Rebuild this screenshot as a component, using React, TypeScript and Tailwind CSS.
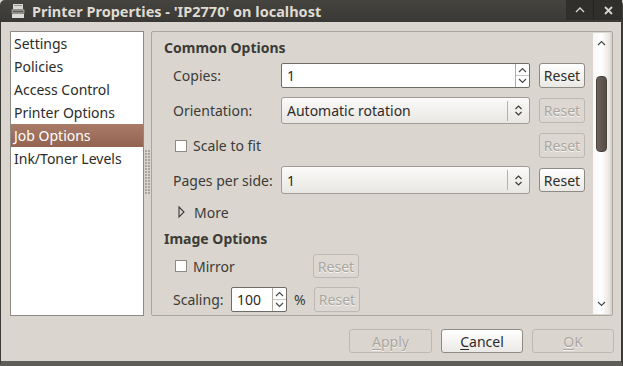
import React from "react";

const FONT = { fontFamily: '"Noto Sans", "DejaVu Sans", sans-serif' };

function ResetBtn({ enabled, className = "" }: { enabled: boolean; className?: string }) {
  return (
    <div
      className={
        "flex items-center justify-center rounded-[3px] border text-[14px] " +
        (enabled
          ? "border-[#8f8b84] bg-gradient-to-b from-[#ffffff] to-[#ebe9e5] text-[#2e2d2a]"
          : "border-[#bdb9b2] bg-[#dcd8d1] text-[#aaa69f] [text-shadow:0_1px_0_#f5f4f2]") +
        " " +
        className
      }
    >
      Reset
    </div>
  );
}

function SpinArrows({ className = "" }: { className?: string }) {
  return (
    <div className={"flex flex-col items-center justify-center border-l border-[#b0aca5] " + className}>
      <svg width="9" height="6" viewBox="0 0 9 6">
        <path d="M1 5 L4.5 1.5 L8 5" fill="none" stroke="#4a4945" strokeWidth="1.2" />
      </svg>
      <div className="w-full h-px bg-[#c9c5be] my-[2px]" />
      <svg width="9" height="6" viewBox="0 0 9 6">
        <path d="M1 1 L4.5 4.5 L8 1" fill="none" stroke="#4a4945" strokeWidth="1.2" />
      </svg>
    </div>
  );
}

function ComboArrows() {
  return (
    <div className="flex items-center h-full">
      <div className="w-px h-[20px] bg-[#b5b1aa]" />
      <div className="w-[21px] flex justify-center">
        <svg width="9" height="13" viewBox="0 0 9 13">
          <path d="M1.5 5 L4.5 2 L7.5 5" fill="none" stroke="#3c3b37" strokeWidth="1.2" />
          <path d="M1.5 8 L4.5 11 L7.5 8" fill="none" stroke="#3c3b37" strokeWidth="1.2" />
        </svg>
      </div>
    </div>
  );
}

function Checkbox() {
  return <div className="w-[12px] h-[12px] border border-[#8f8b84] bg-white shrink-0" />;
}

export default function App() {
  const items = ["Settings", "Policies", "Access Control", "Printer Options", "Job Options", "Ink/Toner Levels"];
  return (
    <div
      style={FONT}
      className="w-[623px] h-[366px] flex flex-col overflow-hidden bg-[#dad6cf] text-[#3c3b37]"
    >
      {/* Title bar */}
      <div className="h-[22px] shrink-0 flex items-center bg-gradient-to-b from-[#45443f] to-[#3a3935] rounded-t-[5px]">
        <div className="w-[32px] flex justify-center pl-[3px]">
          <svg width="14" height="16" viewBox="0 0 14 16">
            <rect x="2" y="1" width="10" height="5" fill="#d8d7d3" />
            <rect x="3" y="2" width="8" height="1" fill="#9a9994" />
            <rect x="0.5" y="6" width="13" height="5" rx="1" fill="#8f8e89" />
            <rect x="2" y="8" width="10" height="1" fill="#5a5955" />
            <rect x="1" y="11" width="12" height="4" fill="#dcdbd7" />
          </svg>
        </div>
        <div className="text-[14.5px] font-bold text-[#dfdbd2] leading-none">
          Printer Properties - 'IP2770' on localhost
        </div>
        <div className="flex-1" />
        <div className="flex h-[20px] self-start mr-[1px]">
          <div className="w-[28px] h-full bg-[#302f2c] flex items-center justify-center border-r border-[#25241f]">
            <svg width="10" height="6" viewBox="0 0 10 6">
              <path d="M1 5 L5 1 L9 5" fill="none" stroke="#d8d6d0" strokeWidth="1.4" />
            </svg>
          </div>
          <div className="w-[28px] h-full bg-[#302f2c] flex items-center justify-center">
            <svg width="9" height="9" viewBox="0 0 9 9">
              <path d="M1 1 L8 8 M8 1 L1 8" fill="none" stroke="#d8d6d0" strokeWidth="1.8" />
            </svg>
          </div>
        </div>
      </div>

      {/* Body */}
      <div className="flex-1 flex flex-col border-l border-l-[#3c3b37] border-r-2 border-r-[#3c3b37] border-b-[5px] border-b-[#5f5d58]">
        <div className="flex pt-[9px] pl-[9px]">
          {/* Left list */}
          <div className="w-[134px] h-[285px] bg-white border border-[#8d8a85]">
            {items.map((t) => (
              <div
                key={t}
                className={
                  "h-[23px] flex items-center pl-[3px] text-[14px] " +
                  (t === "Job Options"
                    ? "bg-gradient-to-b from-[#a87c69] to-[#93634f] text-white"
                    : "text-[#2c2b28]")
                }
              >
                {t}
              </div>
            ))}
          </div>
          {/* Pane handle */}
          <div className="w-[7px] h-[285px] flex justify-center pt-[119px]">
            <div className="grid grid-cols-2 gap-x-[1px] gap-y-[1px] h-[45px] content-start">
              {Array.from({ length: 30 }).map((_, i) => (
                <div key={i} className="w-[2px] h-[2px] bg-[#aaa69f]" />
              ))}
            </div>
          </div>
          {/* Right frame */}
          <div className="w-[462px] h-[285px] border border-[#aaa69f] rounded-[2px] flex p-px">
            <div className="flex-1 flex flex-col pt-[5px]">
              <div className="h-[18px] flex items-center pl-[11px] text-[14px] font-bold text-[#3c3b37]">
                Common Options
              </div>
              {/* Copies */}
              <div className="mt-[7px] h-[25px] flex items-center">
                <div className="w-[128px] pl-[20px] text-[14px]">Copies:</div>
                <div className="w-[249px] h-full bg-white border border-[#6f6c66] rounded-[2px] flex">
                  <div className="flex-1 flex items-center pl-[5px] text-[14px] text-[#2c2b28]">1</div>
                  <SpinArrows className="w-[14px]" />
                </div>
                <ResetBtn enabled className="ml-[9px] w-[46px] h-full" />
              </div>
              {/* Orientation */}
              <div className="mt-[9px] h-[27px] flex items-center">
                <div className="w-[128px] pl-[20px] text-[14px]">Orientation:</div>
                <div className="w-[249px] h-full border border-[#a09c95] rounded-[3px] bg-gradient-to-b from-[#fbfaf9] to-[#e9e7e3] flex items-center">
                  <div className="flex-1 pl-[5px] text-[14px] text-[#2c2b28]">Automatic rotation</div>
                  <ComboArrows />
                </div>
                <ResetBtn enabled={false} className="ml-[9px] w-[46px] h-[25px]" />
              </div>
              {/* Scale to fit */}
              <div className="mt-[9px] h-[25px] flex items-center">
                <div className="w-[386px] pl-[22px] flex items-center">
                  <Checkbox />
                  <span className="ml-[6px] text-[14px]">Scale to fit</span>
                </div>
                <ResetBtn enabled={false} className="w-[46px] h-full" />
              </div>
              {/* Pages per side */}
              <div className="mt-[8px] h-[28px] flex items-center">
                <div className="w-[128px] pl-[20px] text-[14px]">Pages per side:</div>
                <div className="w-[249px] h-full border border-[#a09c95] rounded-[3px] bg-gradient-to-b from-[#fbfaf9] to-[#e9e7e3] flex items-center">
                  <div className="flex-1 pl-[5px] text-[14px] text-[#2c2b28]">1</div>
                  <ComboArrows />
                </div>
                <ResetBtn enabled className="ml-[9px] w-[46px] h-[24px]" />
              </div>
              {/* More */}
              <div className="mt-[8px] h-[20px] flex items-center pl-[25px]">
                <svg width="7" height="12" viewBox="0 0 7 12">
                  <path d="M1 1 L6 6 L1 11 Z" fill="none" stroke="#3c3b37" strokeWidth="1.1" />
                </svg>
                <span className="ml-[9px] text-[14px]">More</span>
              </div>
              {/* Image Options */}
              <div className="mt-[7px] h-[18px] flex items-center pl-[11px] text-[14px] font-bold">
                Image Options
              </div>
              {/* Mirror */}
              <div className="mt-[7px] h-[24px] flex items-center">
                <div className="w-[160px] pl-[22px] flex items-center">
                  <Checkbox />
                  <span className="ml-[6px] text-[14px]">Mirror</span>
                </div>
                <ResetBtn enabled={false} className="w-[46px] h-full" />
              </div>
              {/* Scaling */}
              <div className="mt-[9px] h-[25px] flex items-center">
                <div className="w-[78px] pl-[20px] text-[14px]">Scaling:</div>
                <div className="w-[56px] h-full bg-white border border-[#6f6c66] rounded-[2px] flex">
                  <div className="flex-1 flex items-center pl-[5px] text-[14px] text-[#2c2b28]">100</div>
                  <SpinArrows className="w-[14px]" />
                </div>
                <div className="w-[27px] pl-[7px] text-[14px]">%</div>
                <ResetBtn enabled={false} className="w-[46px] h-full" />
              </div>
            </div>
            {/* Scrollbar */}
            <div className="w-[17px] h-full mr-px bg-gradient-to-r from-[#f7f7f6] via-[#ffffff] to-[#e6e4e0] flex flex-col items-center">
              <div className="h-[20px] flex items-center justify-center">
                <svg width="9" height="6" viewBox="0 0 9 6">
                  <path d="M1 5 L4.5 1.5 L8 5" fill="none" stroke="#4a4945" strokeWidth="1.2" />
                </svg>
              </div>
              <div className="mt-[23px] w-[11px] h-[76px] rounded-[4px] bg-gradient-to-r from-[#6b625c] to-[#554c46] border border-[#4a423d]" />
              <div className="flex-1" />
              <div className="h-[20px] flex items-center justify-center">
                <svg width="9" height="6" viewBox="0 0 9 6">
                  <path d="M1 1 L4.5 4.5 L8 1" fill="none" stroke="#4a4945" strokeWidth="1.2" />
                </svg>
              </div>
            </div>
          </div>
        </div>
        {/* Buttons */}
        <div className="mt-[13px] h-[24px] flex justify-end gap-[9px] pr-[7px]">
          <div className="w-[83px] h-full rounded-[3px] border border-[#bdb9b2] flex items-center justify-center text-[14px] text-[#aaa69f] [text-shadow:0_1px_0_#f5f4f2]">
            <span><u className="underline-offset-2">A</u>pply</span>
          </div>
          <div className="w-[82px] h-full rounded-[3px] border border-[#8f8b84] bg-gradient-to-b from-[#ffffff] to-[#ebe9e5] flex items-center justify-center text-[14px] text-[#2c2b28]">
            <span><u className="underline-offset-2">C</u>ancel</span>
          </div>
          <div className="w-[82px] h-full rounded-[3px] border border-[#bdb9b2] flex items-center justify-center text-[14px] text-[#aaa69f] [text-shadow:0_1px_0_#f5f4f2]">
            <span><u className="underline-offset-2">O</u>K</span>
          </div>
        </div>
      </div>
    </div>
  );
}
